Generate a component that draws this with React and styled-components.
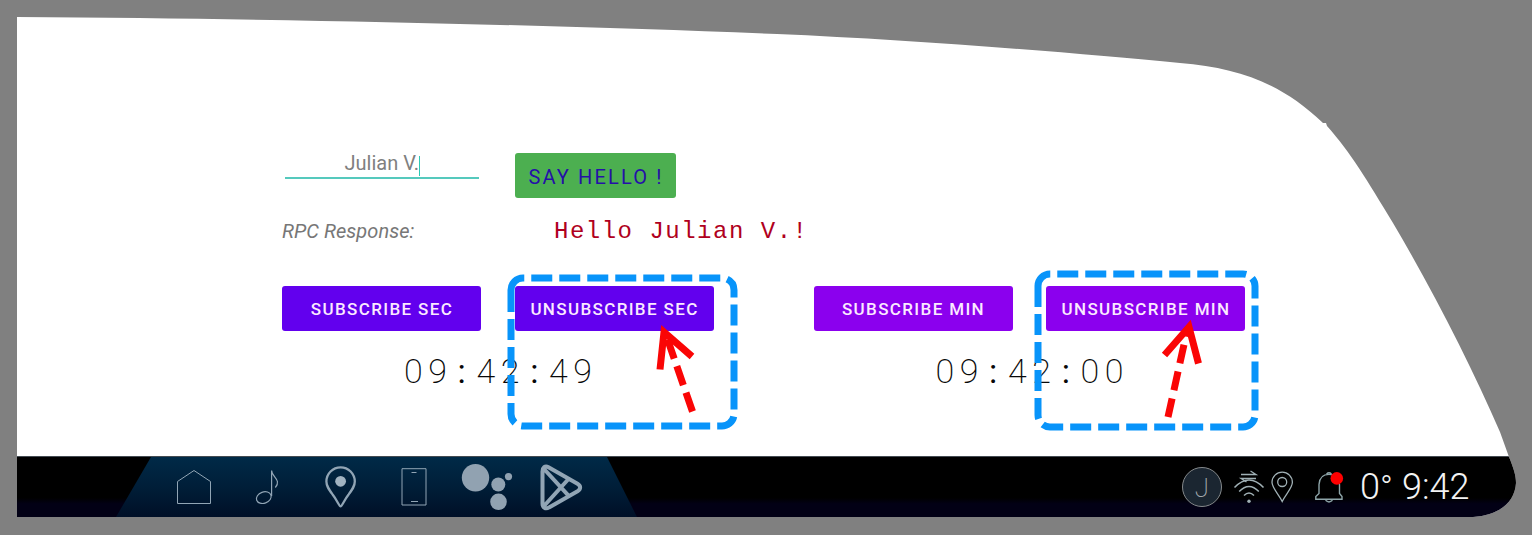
import React from "react";
import styled, { createGlobalStyle } from "styled-components";

const GlobalStyle = createGlobalStyle`
  * { box-sizing: border-box; }
  body { margin: 0; background: #808080; font-family: Roboto, "Liberation Sans", sans-serif; }
`;

const Page = styled.main`
  position: relative;
  width: 1532px;
  height: 535px;
  padding: 17px 16px 18px 17px;
  overflow: hidden;
  background: #808080;
`;

const Screen = styled.div`
  display: flex;
  flex-direction: column;
  width: 1499px;
  height: 500px;
  background: #fff;
  clip-path: path("M0 0 C300 2 560 9 760 17 C900 23 1060 36 1163 46 C1222 51 1264 66 1306 106 L1309 106 L1310 109 C1334 136 1350 163 1376 206 C1415 272 1455 350 1483 415 L1492 440 C1497 452 1499 459 1499 466 C1498 484 1484 498 1456 500 L0 500 Z");
`;

const Content = styled.div`
  flex: 1;
  padding: 136px 0 0 265px;
`;

const FormRow = styled.div`
  display: flex;
  align-items: flex-start;
  height: 45px;
`;

const NameField = styled.div`
  display: flex;
  justify-content: center;
  width: 194px;
  height: 26px;
  margin: 0 36px 0 3px;
  padding-left: 1px;
  border-bottom: 2px solid #55c9bd;
  color: #808080;
  font-size: 20px;
  line-height: 21px;
  white-space: nowrap;
`;

const Caret = styled.span`
  width: 1.5px;
  height: 20px;
  margin-top: 3px;
  background: #2cc9b5;
`;

const Button = styled.button`
  flex: none;
  width: ${(p) => p.$width || 199}px;
  height: 45px;
  padding: 1px 0 0 1px;
  border: 0;
  border-radius: 3px;
  background: ${(p) => p.$fill};
  color: ${(p) => p.$ink || "#fbeaff"};
  font: ${(p) => p.$weight || 500} ${(p) => p.$size || 17}px/${(p) => p.$line || 45}px Roboto, sans-serif;
  letter-spacing: ${(p) => p.$spacing || 1.36}px;
  white-space: nowrap;
`;

const ResponseRow = styled.div`
  display: flex;
  align-items: center;
  height: 30px;
  margin-top: 18px;
`;

const ResponseLabel = styled.span`
  width: 272px;
  color: #777;
  font-size: 20px;
  font-style: italic;
  letter-spacing: 0.05px;
`;

const ResponseText = styled.span`
  color: #b00020;
  font: 24px "Liberation Mono", monospace;
  letter-spacing: 1.5px;
  white-space: pre;
`;

const Subscriptions = styled.div`
  display: flex;
  gap: 99.5px;
  margin-top: 40.4px;
`;

const Subscription = styled.section`
  width: 432px;
`;

const ButtonPair = styled.div`
  display: flex;
  gap: 33.5px;
`;

const Clock = styled.div`
  display: flex;
  justify-content: center;
  margin-top: 19px;
  color: #080808;
  font: 200 34px/42px Roboto, sans-serif;
`;

const ClockDigit = styled.span`
  width: 24.2px;
  text-align: center;
  font-weight: ${(p) => (p.$separator ? 400 : 200)};
`;

const NavBar = styled.footer`
  display: flex;
  flex: none;
  justify-content: space-between;
  height: 61px;
  border-top: 1px solid #444b52;
  background: linear-gradient(#000 0 68%, #020015 78%, #020015);
`;

const Dock = styled.nav`
  display: flex;
  align-items: center;
  width: 521px;
  height: 60px;
  margin-left: 99px;
  padding-left: 41px;
  background: linear-gradient(#002a47, #001e38 50%, #000f27);
  clip-path: polygon(35px 0, 491px 0, 521px 100%, 0 100%);
`;

const DockItem = styled.div`
  display: flex;
  flex: none;
  justify-content: center;
  width: 73.4px;
`;

const Icon = styled.svg`
  display: block;
  flex: none;
  overflow: visible;
  fill: none;
  stroke: ${(p) => p.$tone || "#91a5b5"};
  stroke-width: ${(p) => p.$stroke || 1};
`;

const Status = styled.div`
  display: flex;
  align-items: center;
  width: 334px;
  color: #f3f3f3;
`;

const Avatar = styled.div`
  width: 40px;
  height: 40px;
  border: 1px solid #85898b;
  border-radius: 50%;
  background: #1b2631;
  color: #a2a9ae;
  font: 200 26px/40px Roboto, sans-serif;
  text-align: center;
`;

const StatusIcons = styled.div`
  display: flex;
  width: 138px;
  padding-left: 11px;
`;

const Readout = styled.span`
  width: ${(p) => p.$width}px;
  font: 300 36px/50px Roboto, sans-serif;
  white-space: nowrap;
`;

const Degree = styled.span`
  font-size: 34px;
`;

const Annotations = styled.svg`
  position: absolute;
  inset: 0;
  fill: none;
  stroke-width: 7;
  pointer-events: none;
`;

function ClockFace({ value }) {
  return (
    <Clock>
      {value.split("").map((char, i) => (
        <ClockDigit key={i} $separator={char === ":"}>{char}</ClockDigit>
      ))}
    </Clock>
  );
}

function DockIcon({ children, stroke }) {
  return (
    <DockItem>
      <Icon width="48" height="48" viewBox="0 0 48 48" $stroke={stroke}>
        {children}
      </Icon>
    </DockItem>
  );
}

export default function App() {
  return (
    <Page>
      <GlobalStyle />
      <Screen>
        <Content>
          <FormRow>
            <NameField>Julian V.<Caret /></NameField>
            <Button $width={161} $fill="#4caf50" $ink="#2510a8" $size={20} $weight={400} $line={47} $spacing={2.15}>SAY HELLO !</Button>
          </FormRow>
          <ResponseRow>
            <ResponseLabel>RPC Response:</ResponseLabel>
            <ResponseText>Hello Julian V.!</ResponseText>
          </ResponseRow>
          <Subscriptions>
            <Subscription>
              <ButtonPair>
                <Button $fill="#6200ee">SUBSCRIBE SEC</Button>
                <Button $fill="#6200ee">UNSUBSCRIBE SEC</Button>
              </ButtonPair>
              <ClockFace value="09:42:49" />
            </Subscription>
            <Subscription>
              <ButtonPair>
                <Button $fill="#8b00ee">SUBSCRIBE MIN</Button>
                <Button $fill="#8b00ee">UNSUBSCRIBE MIN</Button>
              </ButtonPair>
              <ClockFace value="09:42:00" />
            </Subscription>
          </Subscriptions>
        </Content>
        <NavBar>
          <Dock>
            <DockIcon>
              <path d="M24 7.5 40.5 18.5V40.5H7.5V18.5Z" />
            </DockIcon>
            <DockIcon stroke={1.2}>
              <ellipse cx="20.8" cy="34.6" rx="7.6" ry="5.6" transform="rotate(-20 20.8 34.6)" />
              <path d="M28.6 33V7.5C28.6 14 39 17 32.3 24.5" />
            </DockIcon>
            <DockIcon stroke={2.3}>
              <path d="M24.6 43.3C23.1 43.3 21.6 38 16.6 31.5 12.6 26 10.4 23 10.4 18.6a14.2 14.2 0 0 1 28.4 0c0 4.4-2.2 7.4-6.2 12.9-5 6.5-6.5 11.8-8 11.8Z" />
              <circle cx="24.6" cy="18.3" r="5.4" fill="#a1b3c1" stroke="none" />
            </DockIcon>
            <DockIcon>
              <path d="M12 5.7H36V42H12ZM21.5 9.5H26.5M21 38.5H28" />
            </DockIcon>
            <DockIcon>
              <g fill="#91a2b1" stroke="none">
                <circle cx="12.5" cy="14.7" r="13.7" />
                <circle cx="35.3" cy="21.5" r="7" />
                <circle cx="35.5" cy="38.8" r="8.3" />
                <circle cx="45.5" cy="13.6" r="3.6" />
              </g>
            </DockIcon>
            <DockIcon stroke={4}>
              <path d="M5.5 8.5C5.5 4.5 8 2.2 11.5 4.2L40.5 20.8C44 23 44 26 40.5 28.2L12 44.4C8.5 46.5 5.5 44.5 5.5 40.5ZM7 6 31.5 32.7M7 43 31.5 16" strokeLinejoin="round" />
            </DockIcon>
          </Dock>
          <Status>
            <Avatar>J</Avatar>
            <StatusIcons>
              <Icon width="32" height="40" viewBox="0 0 32 40" $stroke="1.5" $tone="#a0b0b5">
                <path d="M1.5 20.5Q16 5.5 30.5 20.5M6.2 24.5Q16 14.5 25.8 24.5M11 28.5Q16 23.5 21 28.5" />
                <circle cx="16" cy="34.2" r="1.7" fill="#a0b0b5" stroke="none" />
                <path d="M8 7.5H23L17.5 4M23 11.5H8L13.5 15" strokeWidth="1.3" />
              </Icon>
              <Icon width="34" height="40" viewBox="0 0 34 40" $stroke="1.3" $tone="#a0b0b5">
                <path d="M17.2 34.5C14 27.5 7 21 7 15.3a10.2 10.2 0 0 1 20.4 0C27.4 21 20.4 27.5 17.2 34.5Z" />
                <circle cx="17.2" cy="15" r="4.5" />
              </Icon>
              <Icon width="40" height="40" viewBox="0 0 40 40" $stroke="1.4" $tone="#8ea5a9">
                <path d="M16.8 32.3V29.5L20 26.5V17.5C20.5 10 24 7.4 30 7.4S40 10 40.5 17.5V26.5L43 29.5V32.3ZM27.5 7Q30 4.7 32.5 7M26.5 33.3Q30 36.5 33.5 33.3" />
                <circle cx="37.8" cy="11.4" r="6.3" fill="#ff0000" stroke="none" />
              </Icon>
            </StatusIcons>
            <Readout $width={42}>0<Degree>°</Degree></Readout>
            <Readout $width={90}>9:42</Readout>
          </Status>
        </NavBar>
      </Screen>
      <Annotations width="1532" height="535" viewBox="0 0 1532 535">
        <g stroke="#0894fa" strokeDasharray="21 7">
          <path d="M511 291V290A12 12 0 0 1 523 278H722A12 12 0 0 1 734 290V414A12 12 0 0 1 722 426H523A12 12 0 0 1 511 414V291" />
          <path d="M1038 288V286A12 12 0 0 1 1050 274H1243A12 12 0 0 1 1255 286V415A12 12 0 0 1 1243 427H1050A12 12 0 0 1 1038 415V288" />
        </g>
        <g stroke="#fa0505">
          <path d="M660 369.5 664 332 692 356.5" />
          <path d="M692.5 411.5 665 332" strokeDasharray="20 8" />
          <path d="M1164.5 355 1189 327 1198.5 363.5" />
          <path d="M1168 417 1187 331" strokeDasharray="19 8.5" />
        </g>
      </Annotations>
    </Page>
  );
}
